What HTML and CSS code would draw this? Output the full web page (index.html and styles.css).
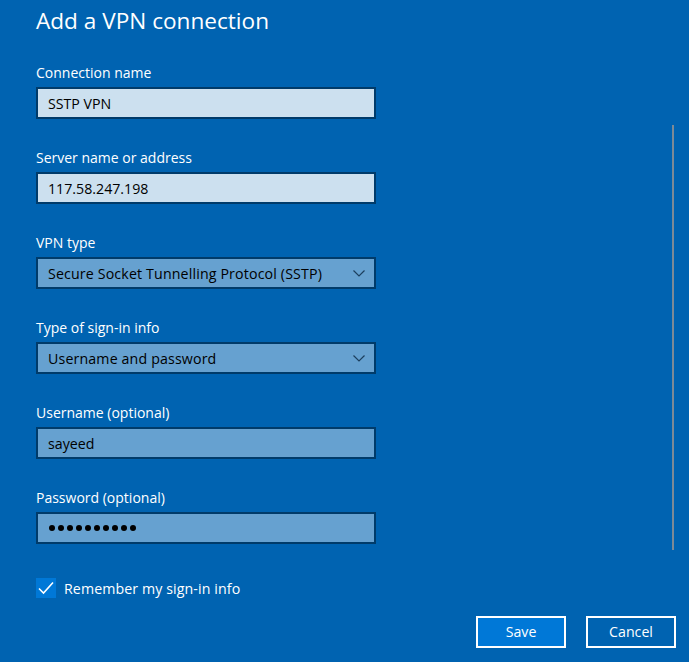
FILE: index.html
```html
<!DOCTYPE html>
<html lang="en">
<head>
<meta charset="utf-8">
<title>Add a VPN connection</title>
<link rel="stylesheet" href="styles.css">
</head>
<body>
<div class="dialog">
  <h1 class="title">Add a VPN connection</h1>
  <div class="form">
    <div class="field">
      <div class="label">Connection name</div>
      <div class="box box-light">SSTP VPN</div>
    </div>
    <div class="field">
      <div class="label">Server name or address</div>
      <div class="box box-light">117.58.247.198</div>
    </div>
    <div class="field">
      <div class="label">VPN type</div>
      <div class="box box-mid select">
        <span>Secure Socket Tunnelling Protocol (SSTP)</span>
        <svg class="chev" width="12" height="7" viewBox="0 0 12 7"><path d="M0.5 0.5 L6 6 L11.5 0.5" fill="none" stroke="#1d3f5e" stroke-width="1.2"/></svg>
      </div>
    </div>
    <div class="field">
      <div class="label">Type of sign-in info</div>
      <div class="box box-mid select">
        <span>Username and password</span>
        <svg class="chev" width="12" height="7" viewBox="0 0 12 7"><path d="M0.5 0.5 L6 6 L11.5 0.5" fill="none" stroke="#1d3f5e" stroke-width="1.2"/></svg>
      </div>
    </div>
    <div class="field">
      <div class="label">Username (optional)</div>
      <div class="box box-mid">sayeed</div>
    </div>
    <div class="field">
      <div class="label">Password (optional)</div>
      <div class="box box-mid dots"><i></i><i></i><i></i><i></i><i></i><i></i><i></i><i></i><i></i><i></i></div>
    </div>
  </div>
  <div class="check-row">
    <span class="checkbox">
      <svg width="20" height="20" viewBox="0 0 20 20"><path d="M3 10.5 L7.5 15 L17 4.5" fill="none" stroke="#fff" stroke-width="1.6"/></svg>
    </span>
    <span class="check-label">Remember my sign-in info</span>
  </div>
  <div class="buttons">
    <button class="btn btn-primary">Save</button>
    <button class="btn">Cancel</button>
  </div>
  <div class="scrollbar"></div>
</div>
</body>
</html>
```
FILE: styles.css
```css
html, body {
  margin: 0;
  padding: 0;
}
body {
  background: #0063b1;
  width: 689px;
  height: 662px;
  overflow: hidden;
  font-family: "Open Sans", "Noto Sans", sans-serif;
  color: #ffffff;
}
.dialog {
  position: relative;
  height: 662px;
  padding-left: 36px;
  display: flex;
  flex-direction: column;
}
.title {
  margin: 5px 0 0 0;
  font-size: 22.6px;
  font-weight: 400;
  line-height: 32px;
  height: 32px;
}
.form {
  margin-top: 25px;
  display: flex;
  flex-direction: column;
  gap: 28px;
}
.field {
  display: flex;
  flex-direction: column;
  gap: 4px;
}
.label {
  font-size: 14px;
  line-height: 20px;
  padding-top: 1px;
  height: 20px;
}
.box {
  box-sizing: border-box;
  width: 340px;
  height: 32px;
  border: 2px solid #003b6a;
  padding: 0 10px;
  display: flex;
  align-items: center;
  font-size: 14.2px;
  color: #000;
}
.box-light {
  background: #cce0ef;
}
.box-mid {
  background: #66a1d0;
}
.select {
  justify-content: space-between;
}
.select span {
  letter-spacing: 0.15px;
}
.chev {
  margin-right: -1px;
}
.dots {
  gap: 3px;
  padding-left: 11px;
}
.dots i {
  display: block;
  width: 6px;
  height: 6px;
  border-radius: 50%;
  background: #000;
}
.check-row {
  margin-top: 34px;
  display: flex;
  align-items: center;
  gap: 8px;
  height: 20px;
}
.checkbox {
  width: 20px;
  height: 20px;
  background: #0078d7;
  display: block;
}
.checkbox svg {
  display: block;
}
.check-label {
  font-size: 14.2px;
  letter-spacing: 0.1px;
}
.buttons {
  margin-top: 18px;
  align-self: flex-end;
  margin-right: 13px;
  display: flex;
  gap: 20px;
}
.btn {
  box-sizing: border-box;
  width: 90px;
  height: 32px;
  border: 2px solid #ffffff;
  background: #0063b1;
  color: #ffffff;
  font-family: "Open Sans", "Noto Sans", sans-serif;
  font-size: 14.2px;
  padding: 0 0 2px 0;
}
.btn-primary {
  background: #0078d7;
}
.scrollbar {
  position: absolute;
  left: 672px;
  top: 125px;
  width: 2px;
  height: 425px;
  background: #7d8a96;
}
```
